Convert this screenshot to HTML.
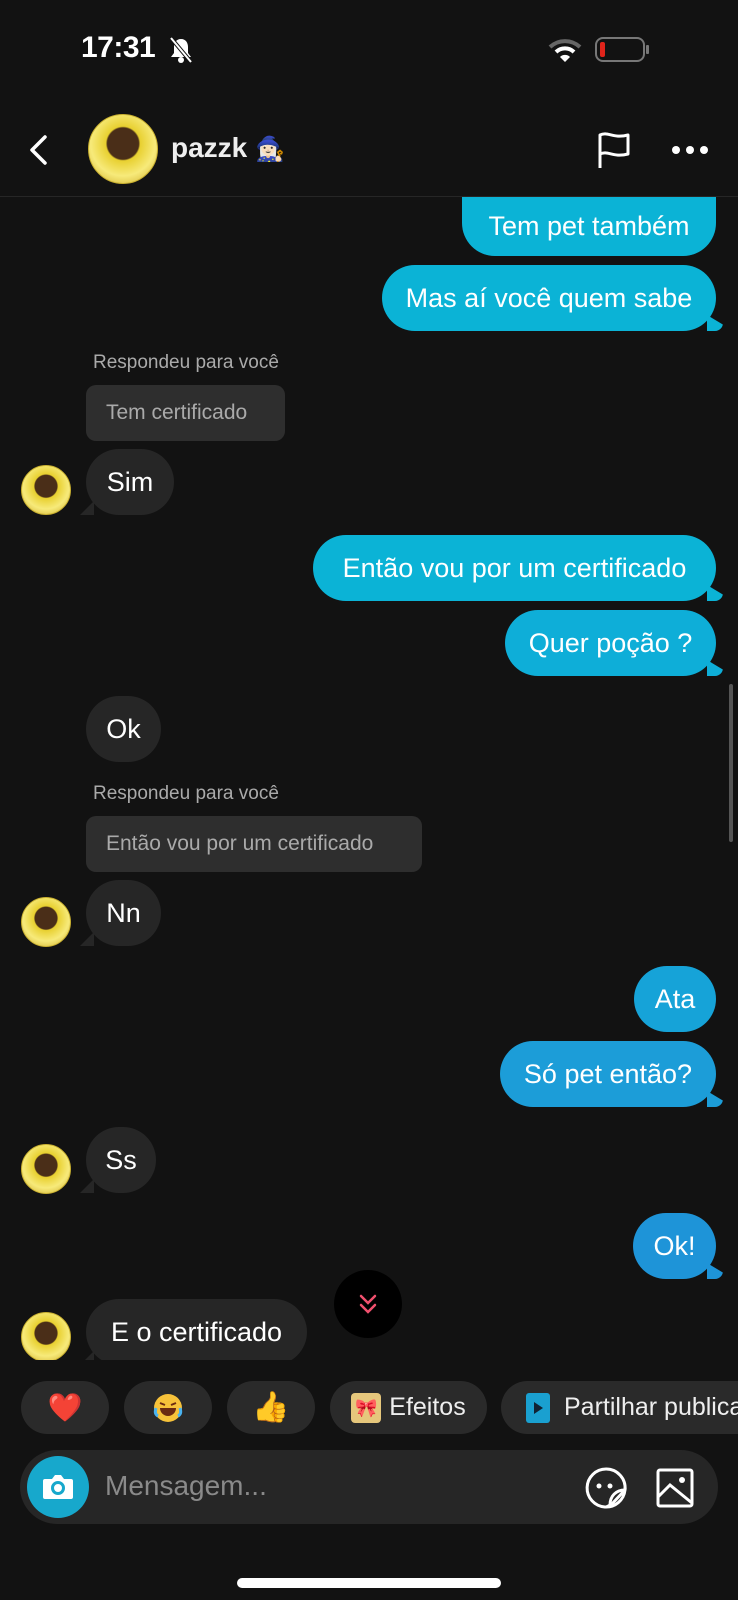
<!DOCTYPE html>
<html><head><meta charset="utf-8"><style>
*{margin:0;padding:0;box-sizing:border-box}
body{width:738px;height:1600px;background:#121212;position:relative;overflow:hidden;font-family:"Liberation Sans","DejaVu Sans",sans-serif;color:#fff}
.a{position:absolute}
.b{position:absolute;border-radius:33px;font-size:27px;display:flex;align-items:center;justify-content:center;color:#fff;white-space:nowrap}
.o{background:#0bb3d6}
.o2{background:#1c9dd8}
.i{background:#262626}
.t::after{content:"";position:absolute;right:-7px;bottom:0;width:16px;height:16px;background:inherit;border-radius:0 0 8px 0;clip-path:polygon(0 0,100% 60%,100% 100%,0 100%)}
.ti::after{content:"";position:absolute;left:-6px;bottom:0;width:14px;height:14px;background:inherit;clip-path:polygon(100% 0,0 100%,100% 100%)}
.lbl{position:absolute;color:#aaa;font-size:19px}
.rep{position:absolute;background:#2e2e2e;border-radius:10px;color:#aaa;font-size:21px;display:flex;align-items:center;padding-left:20px}
.av{position:absolute;border-radius:50%;background:radial-gradient(circle at 50% 42%,#4a2e18 0 30%,#e8d030 33%,#f7ea7a 62%,#c9a51c 100%);border:1px solid #c9b030}
.chip{position:absolute;top:1381px;height:53px;border-radius:27px;background:#2a2a2a;display:flex;align-items:center;justify-content:center;font-size:25px;color:#eee}
</style></head><body>
<div class="a" style="left:81px;top:31px;font-size:30px;font-weight:bold;letter-spacing:-0.5px">17:31</div>
<svg class="a" style="left:168px;top:36px" width="26" height="28" viewBox="0 0 26 28"><path d="M13 3c-5 0-7 4-7 8v6l-3 4h20l-3-4v-6c0-4-2-8-7-8z" fill="#fff"/><circle cx="13" cy="24" r="3" fill="#fff"/><line x1="3" y1="2" x2="23" y2="26" stroke="#121212" stroke-width="4"/><line x1="3" y1="2" x2="23" y2="26" stroke="#fff" stroke-width="2"/></svg>
<svg class="a" style="left:548px;top:38px" width="34" height="24" viewBox="0 0 34 24"><path d="M2 9a22 22 0 0 1 30 0" stroke="#666" stroke-width="4" fill="none"/><path d="M8 14a13 13 0 0 1 18 0" stroke="#fff" stroke-width="4" fill="none"/><path d="M12 19l5 5 5-5a7 7 0 0 0-10 0z" fill="#fff"/></svg>
<div class="a" style="left:595px;top:37px;width:50px;height:25px;border:2px solid #777;border-radius:8px"></div>
<div class="a" style="left:600px;top:42px;width:5px;height:15px;background:#e0241b;border-radius:2px"></div>
<div class="a" style="left:646px;top:45px;width:3px;height:9px;background:#777;border-radius:1px"></div>
<svg class="a" style="left:26px;top:134px" width="24" height="32"><path d="M19 3L6 16l13 13" stroke="#fff" stroke-width="3.5" fill="none" stroke-linecap="round" stroke-linejoin="round"/></svg>
<div class="av" style="left:88px;top:114px;width:70px;height:70px"></div>
<div class="a" style="left:171px;top:132px;font-size:28px;font-weight:bold;color:#eee">pazzk <span style="font-size:24px">🧙🏻‍♀️</span></div>
<svg class="a" style="left:596px;top:130px" width="36" height="40"><path d="M4 38V5c8-4 13 4 28 0v19c-15 4-20-4-28 0" stroke="#fff" stroke-width="3" fill="none" stroke-linejoin="round"/></svg>
<div class="a" style="left:672px;top:146px;width:8px;height:8px;border-radius:50%;background:#fff;box-shadow:14px 0 #fff,28px 0 #fff"></div>
<div class="a" style="left:0;top:196px;width:738px;height:1px;background:#262626"></div>

<div style="position:absolute;left:0;top:197px;width:738px;height:1163px;overflow:hidden">
<div class="b o" style="left:462px;top:-10px;width:254px;height:69px;padding-top:9px;border-radius:0 0 33px 33px">Tem pet também</div>
<div class="b o t" style="left:382px;top:68px;width:334px;height:66px">Mas aí você quem sabe</div>
<div class="lbl" style="left:93px;top:155px">Respondeu para você</div>
<div class="rep" style="left:86px;top:188px;width:199px;height:56px">Tem certificado</div>
<div class="av" style="left:21px;top:268px;width:50px;height:50px"></div>
<div class="b i ti" style="left:86px;top:252px;width:88px;height:66px">Sim</div>
<div class="b o t" style="left:313px;top:338px;width:403px;height:66px">Então vou por um certificado</div>
<div class="b o t" style="left:505px;top:413px;width:211px;height:66px;background:#0eaed8">Quer poção ?</div>
<div class="b i" style="left:86px;top:499px;width:75px;height:66px">Ok</div>
<div class="lbl" style="left:93px;top:586px">Respondeu para você</div>
<div class="rep" style="left:86px;top:619px;width:336px;height:56px">Então vou por um certificado</div>
<div class="av" style="left:21px;top:700px;width:50px;height:50px"></div>
<div class="b i ti" style="left:86px;top:683px;width:75px;height:66px">Nn</div>
<div class="b o2" style="left:634px;top:769px;width:82px;height:66px;background:#16a3d8">Ata</div>
<div class="b o2 t" style="left:500px;top:844px;width:216px;height:66px">Só pet então?</div>
<div class="av" style="left:21px;top:947px;width:50px;height:50px"></div>
<div class="b i ti" style="left:86px;top:930px;width:70px;height:66px">Ss</div>
<div class="b o2 t" style="left:633px;top:1016px;width:83px;height:66px;background:#1e94d8">Ok!</div>
<div class="av" style="left:21px;top:1115px;width:50px;height:50px"></div>
<div class="b i ti" style="left:86px;top:1102px;width:221px;height:66px">E o certificado</div>
<div class="a" style="left:334px;top:1073px;width:68px;height:68px;border-radius:50%;background:#000;display:flex;align-items:center;justify-content:center"><svg width="20" height="22"><path d="M3 3l7 7 7-7M3 12l7 7 7-7" stroke="#f0506e" stroke-width="2.5" fill="none" stroke-linecap="round"/></svg></div>
<div class="a" style="left:729px;top:487px;width:4px;height:158px;background:#555;border-radius:2px"></div>
</div>

<div class="chip" style="left:21px;width:88px;color:#f03;font-size:28px">❤️</div>
<div class="chip" style="left:124px;width:88px"><svg width="32" height="32"><circle cx="16" cy="16" r="14" fill="#f7c23a"/><path d="M8 16h16a8 8 0 0 1-16 0z" fill="#6b2a12"/><path d="M8 11l5 2M24 11l-5 2" stroke="#6b2a12" stroke-width="2"/><path d="M4 16q-2 6 2 8M28 16q2 6-2 8" stroke="#4ab3f0" stroke-width="3" fill="none"/></svg></div>
<div class="chip" style="left:227px;width:88px;font-size:30px">👍</div>
<div class="chip" style="left:330px;width:157px"><span style="display:inline-block;width:30px;height:30px;background:#e6c77c;border-radius:4px;margin-right:8px;font-size:18px;text-align:center;line-height:30px">🎀</span>Efeitos</div>
<div class="chip" style="left:501px;width:280px;justify-content:flex-start;padding-left:25px"><span style="display:inline-block;width:24px;height:30px;background:#1aa0d0;border-radius:3px;margin-right:14px;position:relative"><span style="position:absolute;left:8px;top:9px;border-left:9px solid #123;border-top:6px solid transparent;border-bottom:6px solid transparent"></span></span>Partilhar publica</div>

<div class="a" style="left:20px;top:1450px;width:698px;height:74px;border-radius:37px;background:#262626"></div>
<div class="a" style="left:27px;top:1456px;width:62px;height:62px;border-radius:50%;background:#17a8cc"></div>
<svg class="a" style="left:41px;top:1472px" width="34" height="30"><path d="M4 7h7l3-4h6l3 4h7a2 2 0 0 1 2 2v16a2 2 0 0 1-2 2H4a2 2 0 0 1-2-2V9a2 2 0 0 1 2-2z" fill="#fff"/><circle cx="17" cy="16" r="5.5" fill="none" stroke="#17a8cc" stroke-width="3"/></svg>
<div class="a" style="left:105px;top:1470px;font-size:28px;color:#8a8a8a">Mensagem...</div>
<svg class="a" style="left:584px;top:1466px" width="44" height="44"><path d="M22 3a19 19 0 1 0 19 21c-9 0-15 6-15 15A19 19 0 0 1 22 41" stroke="#fff" stroke-width="3" fill="none"/><path d="M41 24a19 19 0 0 0-19-21M41 24L26 40" stroke="#fff" stroke-width="3" fill="none"/><circle cx="15" cy="20" r="2.5" fill="#fff"/><circle cx="26" cy="20" r="2.5" fill="#fff"/></svg>
<svg class="a" style="left:655px;top:1467px" width="40" height="42"><rect x="3" y="3" width="34" height="36" rx="2" stroke="#fff" stroke-width="3" fill="none"/><path d="M3 30l12-12 22 18" stroke="#fff" stroke-width="3" fill="none"/><circle cx="27" cy="13" r="3" fill="#fff"/></svg>
<div class="a" style="left:237px;top:1578px;width:264px;height:10px;border-radius:5px;background:#fff"></div>
</body></html>
